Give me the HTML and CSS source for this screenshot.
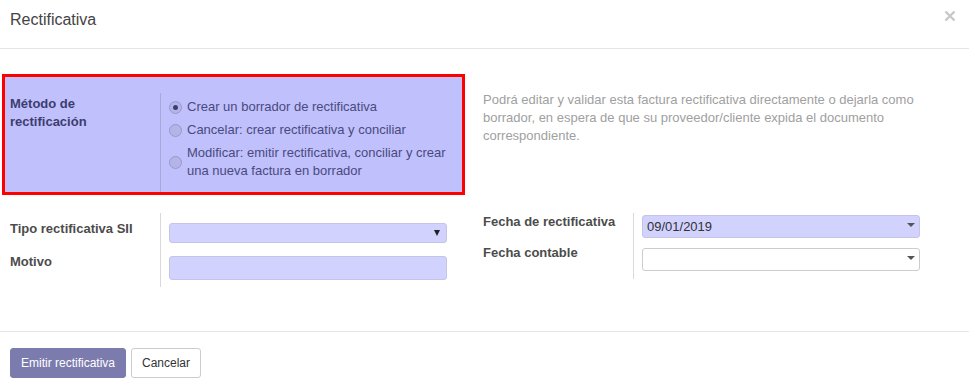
FILE: index.html
```html
<!DOCTYPE html>
<html lang="es">
<head>
    <meta charset="UTF-8">
    <title>Rectificativa</title>
    <link rel="stylesheet" href="styles.css">
</head>
<body>

<div class="modal-header">
    <h4 class="modal-title">Rectificativa</h4>
    <span class="close">
        <svg width="12" height="12" viewBox="0 0 12 12">
            <path d="M1.5 1.5 L10.5 10.5 M10.5 1.5 L1.5 10.5" stroke="#c8c8c8" stroke-width="2.4" fill="none"/>
        </svg>
    </span>
</div>

<div class="modal-body">
    <div class="top-row">
        <div class="highlight">
            <div class="group method-group">
                <div class="label-cell method-label">Método de rectificación</div>
                <div class="field-cell method-field">
                    <div class="option">
                        <span class="radio checked"></span>
                        <span>Crear un borrador de rectificativa</span>
                    </div>
                    <div class="option">
                        <span class="radio"></span>
                        <span>Cancelar: crear rectificativa y conciliar</span>
                    </div>
                    <div class="option">
                        <span class="radio"></span>
                        <span>Modificar: emitir rectificativa, conciliar y crear una nueva factura en borrador</span>
                    </div>
                </div>
            </div>
        </div>
        <p class="help">Podrá editar y validar esta factura rectificativa directamente o dejarla como borrador, en espera de que su proveedor/cliente expida el documento correspondiente.</p>
    </div>

    <div class="bottom-row">
        <div class="group left-group">
            <div class="label-cell row1">Tipo rectificativa SII</div>
            <div class="field-cell row1">
                <div class="select required"><span class="arrow"></span></div>
            </div>
            <div class="label-cell row2">Motivo</div>
            <div class="field-cell row2">
                <div class="input required"></div>
            </div>
        </div>
        <div class="group right-group">
            <div class="label-cell row1">Fecha de rectificativa</div>
            <div class="field-cell row1">
                <div class="date required"><span>09/01/2019</span><span class="caret"></span></div>
            </div>
            <div class="label-cell row2">Fecha contable</div>
            <div class="field-cell row2">
                <div class="date"><span></span><span class="caret"></span></div>
            </div>
        </div>
    </div>
</div>

<div class="modal-footer">
    <button class="btn btn-primary">Emitir rectificativa</button>
    <button class="btn btn-default">Cancelar</button>
</div>

</body>
</html>
```

FILE: styles.css
```css
body {
    margin: 0;
    font-family: "Liberation Sans", Arial, sans-serif;
    font-size: 13px;
    line-height: 18px;
    color: #666666;
    background: #ffffff;
}
.modal-header {
    height: 48px;
    border-bottom: 1px solid #e5e5e5;
    display: flex;
    justify-content: space-between;
    align-items: flex-start;
    padding: 0 13px 0 10px;
}
.modal-title {
    margin: 0;
    padding-top: 10px;
    font-size: 16px;
    line-height: 20px;
    font-weight: normal;
    color: #444444;
}
.close {
    padding-top: 10px;
    display: flex;
}
.modal-body {
    padding: 25px 0 44px 0;
}
.top-row {
    display: flex;
    align-items: flex-start;
}
.highlight {
    margin-left: 2px;
    width: 457px;
    height: 99px;
    border: 3px solid #ff0000;
    background: #c0c0fd;
    padding-top: 16px;
}
.group {
    display: grid;
    grid-template-columns: 151px 286px;
}
.method-group {
    height: 99px;
    grid-template-columns: 156px 295px;
}
.label-cell {
    border-right: 1px solid #d9d9d9;
    font-weight: bold;
    color: #4c4c4c;
}
.method-label {
    padding: 2px 40px 0 5px;
    border-right-color: #a8a8dc;
    color: #3d3d6e;
}
.field-cell {
    padding-left: 8px;
}
.method-field {
    padding-top: 5px;
    color: #4a4a7c;
}
.option {
    display: flex;
    align-items: center;
    gap: 5px;
    margin-bottom: 5px;
    padding-right: 10px;
}
.radio {
    flex: none;
    width: 11px;
    height: 11px;
    border: 1px solid #9898cc;
    border-radius: 50%;
    background: #b4b4e8;
    display: flex;
    align-items: center;
    justify-content: center;
}
.radio.checked::after {
    content: "";
    width: 5px;
    height: 5px;
    border-radius: 50%;
    background: #3e3e6e;
}
.help {
    margin: 0 0 0 18px;
    padding-top: 17px;
    width: 455px;
    color: #a0a0a0;
}
.bottom-row {
    display: flex;
    margin-top: 18px;
}
.left-group {
    margin-left: 10px;
    grid-template-rows: 37px 37px;
}
.right-group {
    margin-left: 36px;
    grid-template-rows: 31px 35px;
}
.left-group .label-cell.row1 {
    padding-top: 7px;
}
.left-group .field-cell.row1 {
    padding-top: 10px;
}
.left-group .label-cell.row2 {
    padding-top: 3px;
}
.left-group .field-cell.row2 {
    padding-top: 6px;
}
.right-group .field-cell.row1 {
    padding-top: 2px;
}
.right-group .field-cell.row2 {
    padding-top: 4px;
}
.select, .input, .date {
    width: 276px;
    border: 1px solid #cccccc;
    border-radius: 3px;
    background: #ffffff;
}
.required {
    background: #d2d2ff;
    border-color: #c4c4e6;
}
.select {
    height: 18px;
    display: flex;
    align-items: center;
    justify-content: flex-end;
}
.arrow {
    margin-right: 6px;
    border-left: 3px solid transparent;
    border-right: 3px solid transparent;
    border-top: 6px solid #222222;
}
.input {
    height: 22px;
}
.date {
    height: 21px;
    display: flex;
    align-items: center;
    justify-content: space-between;
    padding: 0 0 0 4px;
    width: 272px;
    color: #333333;
}
.caret {
    margin: 0 4px 3px 0;
    border-left: 4px solid transparent;
    border-right: 4px solid transparent;
    border-top: 4px solid #555555;
}
.modal-footer {
    border-top: 1px solid #e5e5e5;
    padding: 16px 10px 0 10px;
    display: flex;
    gap: 5px;
}
.btn {
    height: 30px;
    padding: 0 10px;
    font-family: "Liberation Sans", Arial, sans-serif;
    font-size: 12px;
    border-radius: 3px;
    border: 1px solid #cccccc;
    cursor: pointer;
}
.btn-primary {
    background: #7c7bad;
    border-color: #7c7bad;
    color: #ffffff;
}
.btn-default {
    background: #ffffff;
    color: #333333;
}
```
